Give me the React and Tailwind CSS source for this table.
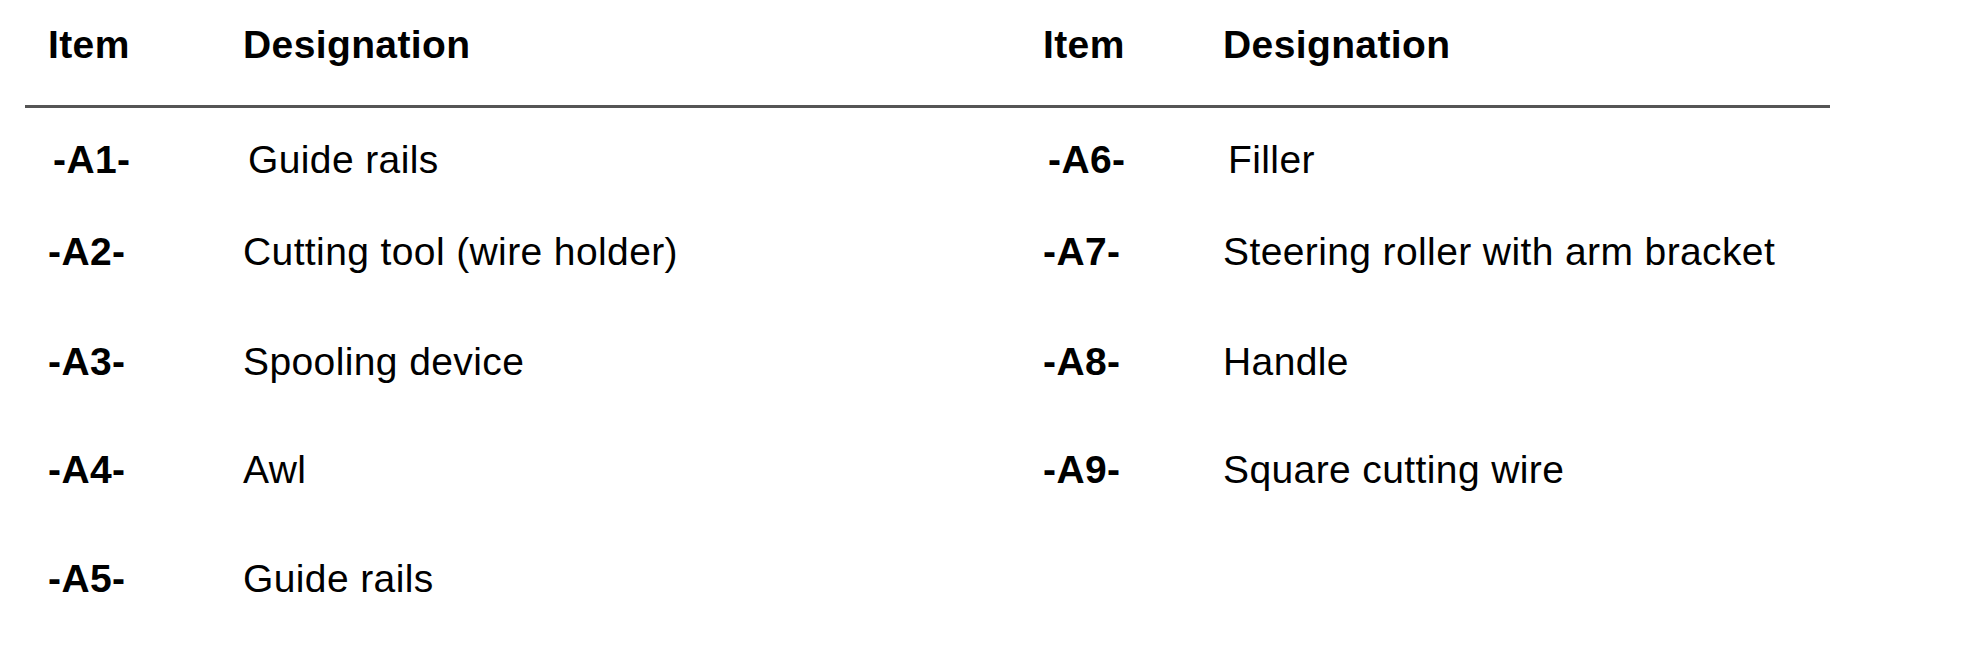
const rows = [
  { left: ["-A1-", "Guide rails"], right: ["-A6-", "Filler"], h: "h-[92px]", shift: "pl-[5px]" },
  { left: ["-A2-", "Cutting tool (wire holder)"], right: ["-A7-", "Steering roller with arm bracket"], h: "h-[110px]", shift: "" },
  { left: ["-A3-", "Spooling device"], right: ["-A8-", "Handle"], h: "h-[108px]", shift: "" },
  { left: ["-A4-", "Awl"], right: ["-A9-", "Square cutting wire"], h: "h-[109px]", shift: "" },
  { left: ["-A5-", "Guide rails"], right: null, h: "h-[40px]", shift: "" },
];

function Cells({ pair, itemW, descW }) {
  if (!pair) return <div className={itemW} />;
  return (
    <>
      <div className={`${itemW} font-bold`}>{pair[0]}</div>
      <div className={descW}>{pair[1]}</div>
    </>
  );
}

export default function App() {
  return (
    <div
      className="h-[649px] w-[1984px] bg-white pl-[25px] pt-[25px] text-[39px] leading-[40px] tracking-[0.01em] text-black"
      style={{ fontFamily: '"Liberation Sans", Arial, sans-serif' }}
    >
      <div className="w-[1805px]">
        <div className="flex h-[40px] pl-[23px] font-bold">
          <div className="w-[195px]">Item</div>
          <div className="w-[800px]">Designation</div>
          <div className="w-[180px]">Item</div>
          <div>Designation</div>
        </div>
        <div className="mt-[40px] h-[3px] bg-[#555555]" />
        <div className="mt-[32px] flex flex-col">
          {rows.map((r, i) => (
            <div key={i} className={`flex pl-[23px] ${r.h}`}>
              <div className={`flex h-[40px] ${r.shift}`}>
                <Cells pair={r.left} itemW="w-[195px]" descW="w-[800px]" />
                <Cells pair={r.right} itemW="w-[180px]" descW="" />
              </div>
            </div>
          ))}
        </div>
      </div>
    </div>
  );
}
